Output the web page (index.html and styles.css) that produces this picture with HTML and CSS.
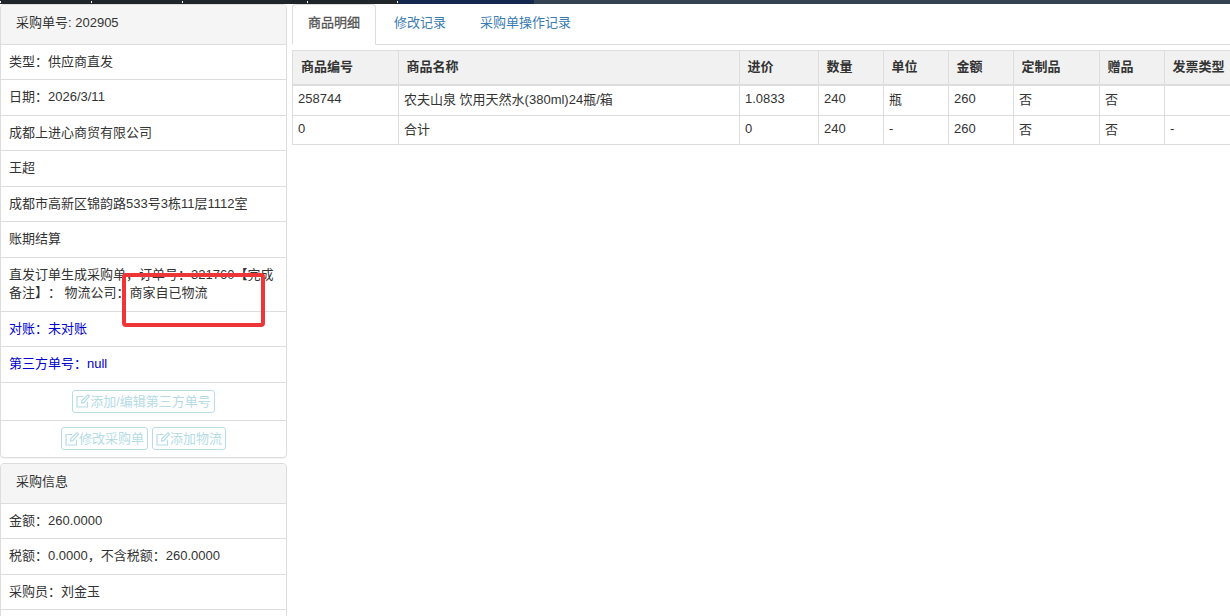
FILE: index.html
```html
<!DOCTYPE html>
<html lang="zh">
<head>
<meta charset="utf-8">
<title>采购单</title>
<link rel="stylesheet" href="styles.css">
</head>
<body>
<div class="topbar"><span class="seg seg-dark"><i class="tick t0"></i><i class="tick t1"></i><i class="tick t2"></i><i class="tick t3"></i><i class="tick t4"></i></span><span class="seg seg-navy"></span><span class="seg seg-slate"></span></div>
<div class="page">
  <aside class="side">
    <section class="panel">
      <div class="panel-head">采购单号: 202905</div>
      <div class="row">类型：供应商直发</div>
      <div class="row">日期：2026/3/11</div>
      <div class="row">成都上进心商贸有限公司</div>
      <div class="row">王超</div>
      <div class="row">成都市高新区锦韵路533号3栋11层1112室</div>
      <div class="row">账期结算</div>
      <div class="row row-note">直发订单生成采购单，订单号：321760【完成备注】： 物流公司：商家自已物流<div class="mark"></div></div>
      <div class="row blue">对账：未对账</div>
      <div class="row blue">第三方单号：null</div>
      <div class="row row-btn">
        <a class="btn"><svg class="ico" viewBox="0 0 14 14"><path d="M11.5 7.5V13H1V2.5h6.5M5.5 9l.4-2.5L12 .8l1.4 1.4L7.8 8.6z" fill="none" stroke="currentColor" stroke-width="1.2"/></svg>添加/编辑第三方单号</a>
      </div>
      <div class="row row-btn row-last">
        <a class="btn"><svg class="ico" viewBox="0 0 14 14"><path d="M11.5 7.5V13H1V2.5h6.5M5.5 9l.4-2.5L12 .8l1.4 1.4L7.8 8.6z" fill="none" stroke="currentColor" stroke-width="1.2"/></svg>修改采购单</a>
        <a class="btn"><svg class="ico" viewBox="0 0 14 14"><path d="M11.5 7.5V13H1V2.5h6.5M5.5 9l.4-2.5L12 .8l1.4 1.4L7.8 8.6z" fill="none" stroke="currentColor" stroke-width="1.2"/></svg>添加物流</a>
      </div>
    </section>
    <section class="panel">
      <div class="panel-head">采购信息</div>
      <div class="row">金额：260.0000</div>
      <div class="row">税额：0.0000，不含税额：260.0000</div>
      <div class="row">采购员：刘金玉</div>
      <div class="row"></div>
    </section>
  </aside>
  <main class="main">
    <nav class="tabs">
      <a class="tab active">商品明细</a>
      <a class="tab">修改记录</a>
      <a class="tab">采购单操作记录</a>
    </nav>
    <table class="grid">
      <colgroup><col class="c1"><col class="c2"><col class="c3"><col class="c4"><col class="c5"><col class="c6"><col class="c7"><col class="c8"><col class="c9"></colgroup>
      <thead><tr><th>商品编号</th><th>商品名称</th><th>进价</th><th>数量</th><th>单位</th><th>金额</th><th>定制品</th><th>赠品</th><th>发票类型</th></tr></thead>
      <tbody>
        <tr><td>258744</td><td>农夫山泉 饮用天然水(380ml)24瓶/箱</td><td>1.0833</td><td>240</td><td>瓶</td><td>260</td><td>否</td><td>否</td><td></td></tr>
        <tr><td>0</td><td>合计</td><td>0</td><td>240</td><td>-</td><td>260</td><td>否</td><td>否</td><td>-</td></tr>
      </tbody>
    </table>
  </main>
</div>
</body>
</html>
```
FILE: styles.css
```css
* { box-sizing: border-box; }
html, body { margin: 0; height: 616px; overflow: hidden; background: #fff; }
body { font-family: "Liberation Sans", "Noto Sans CJK SC", sans-serif; font-size: 13px; color: #333; text-spacing-trim: space-all; }
.topbar { display: flex; height: 4px; }
.seg { display: block; height: 4px; position: relative; }
.seg-dark { width: 398px; background: #20252a; }
.seg-navy { width: 136px; background: #14294d; }
.seg-slate { flex: 1; background: #344352; }
.tick { position: absolute; top: 1px; width: 1px; height: 2px; background: #fff; }
.t0 { left: 0; } .t1 { left: 91px; } .t2 { left: 182px; } .t3 { left: 307px; } .t4 { left: 397px; }
.page { display: flex; align-items: flex-start; }
.side { width: 287px; flex: none; display: flex; flex-direction: column; gap: 5px; }
.panel { border: 1px solid #ddd; border-radius: 4px; background: #fff; box-shadow: 0 1px 1px rgba(0,0,0,.05); }
.panel-head { height: 39.5px; padding: 0 15px; line-height: 36px; background: #f5f5f5; border-bottom: 1px solid #ddd; border-radius: 3px 3px 0 0; }
.row { padding: 0 8px; height: 35.5px; line-height: 34px; border-bottom: 1px solid #ddd; }
.row-note { position: relative; height: 54px; padding-top: 8px; line-height: 18px; }
.row-btn { display: flex; justify-content: center; gap: 4px; align-items: center; height: 38px; }
.row-last { border-bottom: 0; height: 36.5px; }
.blue { color: #00c; }
.mark { position: absolute; left: 121px; top: 15px; width: 143px; height: 54px; border: 4px solid #ee3538; border-radius: 4px; }
.btn { display: inline-flex; align-items: center; height: 23px; padding: 0 3px; line-height: 21px; color: #b5dce6; border: 1px solid #b8dde6; border-radius: 3px; }
.ico { width: 14px; height: 14px; flex: none; }
.main { flex: 1; padding-left: 5px; min-width: 0; }
.tabs { display: flex; gap: 2px; height: 41px; border-bottom: 1px solid #ddd; }
.tab { display: block; height: 41px; padding: 0 15px; line-height: 36px; color: #3a7bb2; border: 1px solid transparent; }
.tab.active { color: #555; border-color: #ddd; border-bottom-color: #fff; border-radius: 4px 4px 0 0; background: #fff; -webkit-text-stroke: .3px #555; }
.grid { margin-top: 5px; border-collapse: collapse; table-layout: fixed; width: 938px; }
.c1 { width: 106px; } .c2 { width: 341px; } .c3 { width: 79px; } .c4 { width: 65px; } .c5 { width: 65px; } .c6 { width: 65px; } .c7 { width: 86px; } .c8 { width: 65px; } .c9 { width: 66px; }
.grid th, .grid td { border: 1px solid #ddd; padding: 0 5px 4px; text-align: left; white-space: nowrap; overflow: hidden; }
.grid th { height: 34px; background: #f1f1f1; border-bottom-width: 2px; padding: 0 5px 4px 7.5px; font-weight: bold; }
.grid th:first-child { padding-left: 8px; }
.grid tbody tr:first-child td { height: 31px; }
.grid tbody tr:last-child td { height: 29px; }
```
